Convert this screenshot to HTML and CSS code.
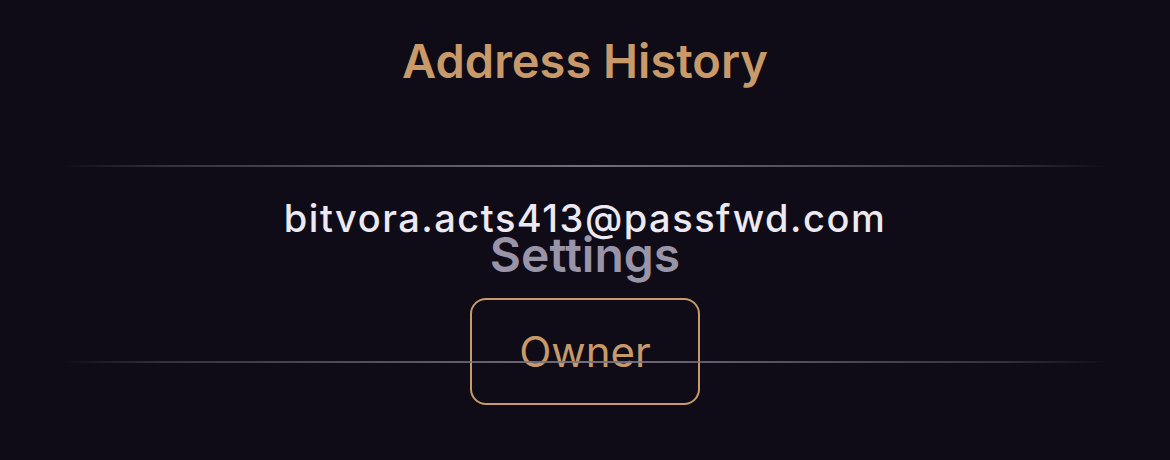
FILE: index.html
```html
<!DOCTYPE html>
<html lang="en">
  <head>
    <meta charset="UTF-8" />
    <meta name="viewport" content="width=device-width, initial-scale=1.0" />
    <title>Address History</title>
    <link rel="stylesheet" href="styles.css">
  </head>
  <body>
    <div class="screen">
      <h1 class="title">Address History</h1>
      <div class="divider"></div>
      <div class="email">bitvora.acts413@passfwd.com</div>
      <div class="settings">Settings</div>
      <div class="owner-row">
        <button class="owner">Owner</button>
        <div class="divider divider-over"></div>
      </div>
    </div>
  </body>
</html>
```

FILE: styles.css
```css
* {
  margin: 0;
  padding: 0;
  box-sizing: border-box;
  font-family: Inter, "Noto Sans", sans-serif;
}

body {
  background-color: #0f0c17;
  min-height: 100vh;
}

.screen {
  display: flex;
  flex-direction: column;
  align-items: center;
  padding-top: 31px;
}

.title {
  color: #c89a6a;
  font-size: 47px;
  font-weight: 600;
  line-height: 60px;
}

.divider {
  width: 1050px;
  height: 2px;
  background: linear-gradient(
    to right,
    rgba(120, 116, 130, 0) 0%,
    rgba(120, 116, 130, 0.35) 10%,
    rgba(120, 116, 130, 0.95) 50%,
    rgba(120, 116, 130, 0.35) 90%,
    rgba(120, 116, 130, 0) 100%
  );
}

.title + .divider {
  margin-top: 74px;
}

.email {
  color: #ece9f2;
  font-size: 38px;
  font-weight: 500;
  line-height: 46px;
  margin-top: 28px;
  letter-spacing: 1.5px;
}

.settings {
  color: #9a94a8;
  font-size: 48px;
  font-weight: 600;
  line-height: 56px;
  margin-top: -14px;
}

.owner-row {
  display: grid;
  justify-items: center;
  margin-top: 15px;
}

.owner-row > * {
  grid-area: 1 / 1;
}

.owner {
  width: 230px;
  height: 107px;
  border: 2px solid #c89a6a;
  border-radius: 16px;
  background: transparent;
  color: #c89a6a;
  font-size: 42px;
  font-weight: 400;
  cursor: pointer;
}

.divider-over {
  align-self: start;
  margin-top: 63px;
  pointer-events: none;
}
```
